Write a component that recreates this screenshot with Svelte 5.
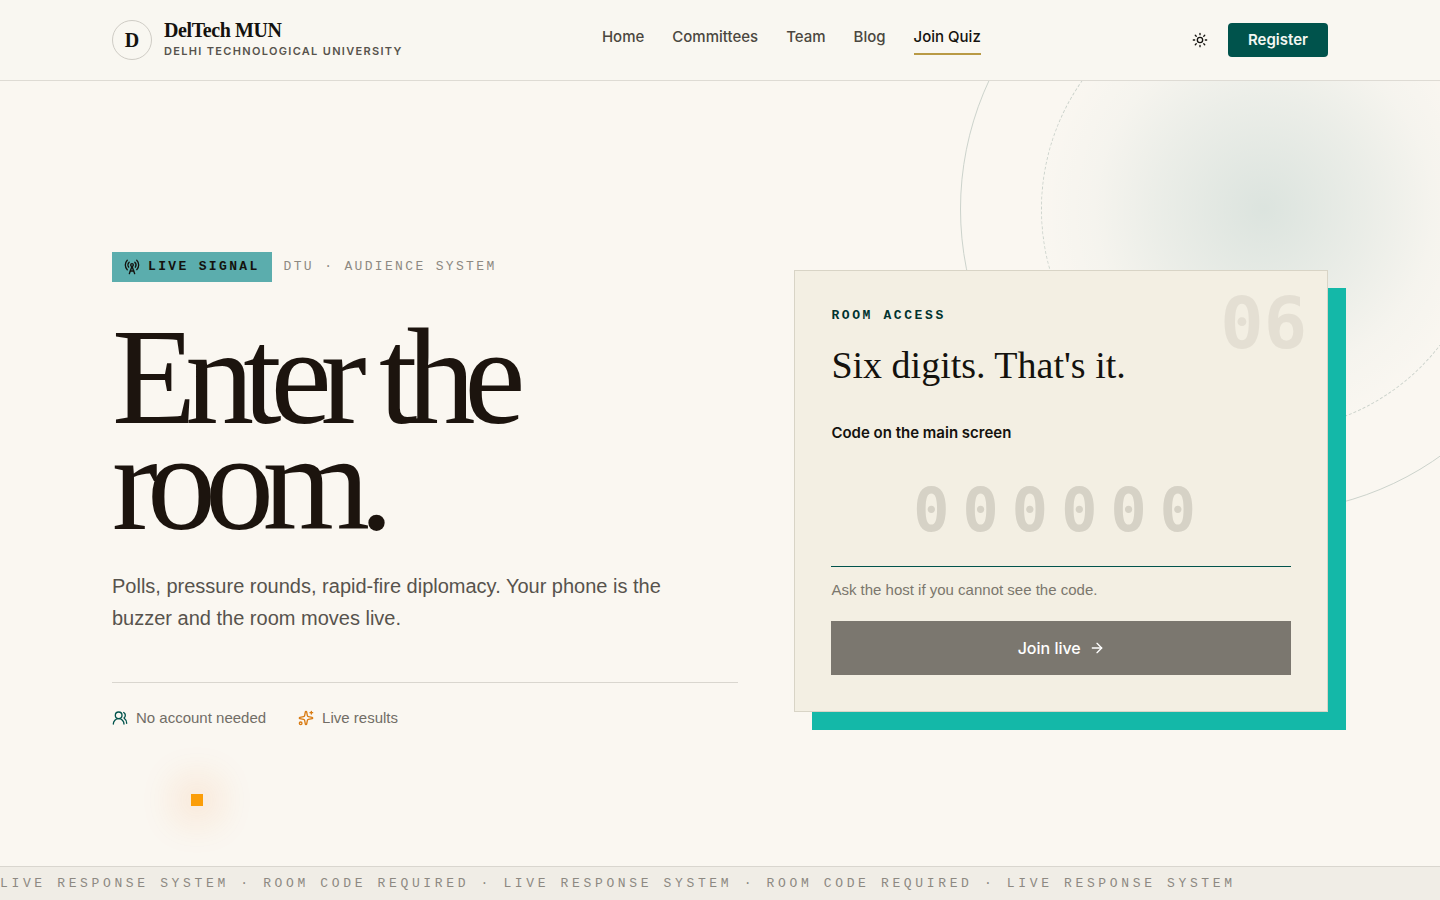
<script lang="ts">
  interface NavLink {
    label: string;
    href: string;
    current?: boolean;
  }

  const links: NavLink[] = [
    { label: "Home", href: "#home" },
    { label: "Committees", href: "#committees" },
    { label: "Team", href: "#team" },
    { label: "Blog", href: "#blog" },
    { label: "Join Quiz", href: "#quiz", current: true },
  ];

  const ticker = [
    "LIVE RESPONSE SYSTEM",
    "ROOM CODE REQUIRED",
    "LIVE RESPONSE SYSTEM",
    "ROOM CODE REQUIRED",
    "LIVE RESPONSE SYSTEM",
  ].join(" · ");

  let code = $state("");
  const ready = $derived(/^\d{6}$/.test(code));

  function join(event: SubmitEvent) {
    event.preventDefault();
    if (!ready) return;
    window.location.hash = `room-${code}`;
  }
</script>

<div class="page">
  <header>
    <div class="bar">
      <a class="brand" href="#home">
        <span class="crest">D</span>
        <span class="brand-text">
          <span class="brand-name">DelTech MUN</span>
          <span class="brand-sub">Delhi Technological University</span>
        </span>
      </a>

      <nav aria-label="Main">
        {#each links as link}
          <a href={link.href} class:current={link.current} aria-current={link.current ? "page" : undefined}>
            {link.label}
          </a>
        {/each}
      </nav>

      <div class="actions">
        <button type="button" class="theme" aria-label="Toggle theme">
          <svg class="icon" viewBox="0 0 24 24" aria-hidden="true">
            <circle cx="12" cy="12" r="4" />
            <path d="M12 2v2M12 20v2M4.93 4.93l1.41 1.41M17.66 17.66l1.41 1.41M2 12h2M20 12h2M6.34 17.66l-1.41 1.41M19.07 4.93l-1.41 1.41" />
          </svg>
        </button>
        <a class="register" href="#register">Register</a>
      </div>
    </div>
  </header>

  <main>
    <div class="rings" aria-hidden="true"></div>
    <div class="spark" aria-hidden="true"></div>

    <div class="hero">
      <section class="intro">
        <div class="eyebrow">
          <span class="signal">
            <svg class="icon" viewBox="0 0 24 24" aria-hidden="true">
              <path d="M4.9 16.1C1 12.2 1 5.8 4.9 1.9" />
              <path d="M7.8 4.7a6.14 6.14 0 0 0-.8 7.5" />
              <circle cx="12" cy="9" r="2" />
              <path d="M16.2 4.8c2 2 2.26 5.11.8 7.47" />
              <path d="M19.1 1.9a9.96 9.96 0 0 1 0 14.1" />
              <path d="M9.5 18h5" />
              <path d="m8 22 4-11 4 11" />
            </svg>
            LIVE SIGNAL
          </span>
          <span class="system">DTU · AUDIENCE SYSTEM</span>
        </div>

        <h1>Enter the<br />room.</h1>

        <p class="lead">
          Polls, pressure rounds, rapid-fire diplomacy. Your phone is the buzzer and the room
          moves live.
        </p>

        <ul class="perks">
          <li>
            <svg class="icon teal" viewBox="0 0 24 24" aria-hidden="true">
              <path d="M18 21a8 8 0 0 0-16 0" />
              <circle cx="10" cy="8" r="5" />
              <path d="M22 20c0-3.37-2-6.5-4-8a5 5 0 0 0-.45-8.3" />
            </svg>
            No account needed
          </li>
          <li>
            <svg class="icon orange" viewBox="0 0 24 24" aria-hidden="true">
              <path d="M11.017 2.814a1 1 0 0 1 1.966 0l1.051 5.558a2 2 0 0 0 1.594 1.594l5.558 1.051a1 1 0 0 1 0 1.966l-5.558 1.051a2 2 0 0 0-1.594 1.594l-1.051 5.558a1 1 0 0 1-1.966 0l-1.051-5.558a2 2 0 0 0-1.594-1.594l-5.558-1.051a1 1 0 0 1 0-1.966l5.558-1.051a2 2 0 0 0 1.594-1.594z" />
              <path d="M20 2v4M22 4h-4" />
              <circle cx="4" cy="20" r="2" />
            </svg>
            Live results
          </li>
        </ul>
      </section>

      <form class="card" onsubmit={join}>
        <span class="count" aria-hidden="true">06</span>
        <p class="kicker">ROOM ACCESS</p>
        <h2>Six digits. That's it.</h2>
        <label for="room-code">Code on the main screen</label>
        <input
          id="room-code"
          type="text"
          inputmode="numeric"
          autocomplete="off"
          maxlength="6"
          placeholder="000000"
          aria-describedby="room-hint"
          bind:value={code}
        />
        <p class="hint" id="room-hint">Ask the host if you cannot see the code.</p>
        <button type="submit" class="join" disabled={!ready}>
          Join live
          <svg class="icon" viewBox="0 0 24 24" aria-hidden="true">
            <path d="M5 12h14" />
            <path d="m12 5 7 7-7 7" />
          </svg>
        </button>
      </form>
    </div>
  </main>

  <footer>{ticker}</footer>
</div>

<style>
  :global(body) {
    margin: 0;
    background: #faf7f1;
  }

  .page {
    --ink: #14120e;
    --teal: #00534c;
    --serif: "Liberation Serif", "Times New Roman", serif;
    --sans: Inter, "Liberation Sans", sans-serif;
    --copy: "Liberation Sans", Arial, sans-serif;
    --mono: "Liberation Mono", "Courier New", monospace;
    --digits: "DejaVu Sans Mono", monospace;

    display: flex;
    flex-direction: column;
    min-height: 100vh;
    color: var(--ink);
    font-family: var(--sans);
    font-size: 15px;
    line-height: 24px;
  }

  .page * {
    box-sizing: border-box;
  }

  a {
    color: inherit;
    text-decoration: none;
  }

  h1,
  h2,
  p {
    margin: 0;
  }

  .icon {
    width: 16px;
    height: 16px;
    flex: none;
    fill: none;
    stroke: currentColor;
    stroke-width: 2;
    stroke-linecap: round;
    stroke-linejoin: round;
  }

  header {
    background: #f9f7f1;
    border-bottom: 1px solid #dedbd4;
  }

  .bar,
  .hero {
    width: 100%;
    max-width: 1280px;
    margin: 0 auto;
    padding: 0 32px;
  }

  .bar {
    display: flex;
    align-items: center;
    justify-content: space-between;
    min-height: 80px;
  }

  .brand {
    display: flex;
    align-items: center;
    gap: 12px;
  }

  .crest {
    display: grid;
    place-items: center;
    width: 40px;
    height: 40px;
    border: 1px solid #cfccc5;
    border-radius: 50%;
    font-family: var(--serif);
    font-size: 20px;
    font-weight: 700;
  }

  .brand-text {
    display: flex;
    flex-direction: column;
    gap: 4px;
  }

  .brand-name {
    font-family: var(--serif);
    font-size: 20px;
    font-weight: 700;
    line-height: 18px;
    letter-spacing: -0.02em;
  }

  .brand-sub {
    color: #57534c;
    font-size: 11px;
    font-weight: 600;
    line-height: 16px;
    letter-spacing: 0.12em;
    text-transform: uppercase;
  }

  nav {
    display: flex;
    gap: 28px;
    color: #4b4740;
    font-weight: 500;
  }

  nav a {
    padding-bottom: 4px;
    border-bottom: 2px solid transparent;
  }

  nav .current {
    color: var(--ink);
    border-color: #b99a45;
  }

  .actions {
    display: flex;
    align-items: center;
    gap: 8px;
  }

  .theme {
    display: grid;
    place-items: center;
    width: 40px;
    height: 40px;
    padding: 0;
    border: 0;
    background: none;
    color: var(--ink);
    cursor: pointer;
  }

  .register {
    padding: 5px 20px;
    border-radius: 4px;
    background: var(--teal);
    color: #f4f7f2;
    font-weight: 600;
  }

  main {
    position: relative;
    display: flex;
    flex: 1;
    align-items: center;
    overflow: hidden;
  }

  .rings {
    position: absolute;
    top: -176px;
    right: -128px;
    width: 608px;
    height: 608px;
    border: 1px solid #ccd3cc;
    border-radius: 50%;
    background: radial-gradient(closest-side, rgba(0, 88, 88, 0.12), rgba(0, 88, 88, 0.06) 36%, rgba(0, 88, 88, 0.02) 56%, rgba(0, 88, 88, 0) 76%);
  }

  .rings::after {
    content: "";
    position: absolute;
    inset: 80px;
    border: 1px dashed #ccd3cc;
    border-radius: 50%;
  }

  .spark {
    position: absolute;
    left: 191px;
    bottom: 60px;
    width: 12px;
    height: 12px;
    background: #fb9e09;
    box-shadow: 0 0 36px 16px rgba(249, 115, 22, 0.12);
  }

  .hero {
    position: relative;
    display: grid;
    grid-template-columns: 1.08fr 0.92fr;
    align-items: center;
    gap: 56px;
    padding-top: 34px;
  }

  .eyebrow {
    display: flex;
    align-items: center;
    gap: 12px;
    margin-bottom: 42px;
    font-family: var(--mono);
    font-size: 13px;
    line-height: 18px;
    letter-spacing: 0.18em;
  }

  .signal {
    display: flex;
    align-items: center;
    gap: 8px;
    padding: 6px 12px;
    background: #5badad;
    font-weight: 700;
  }

  .system {
    color: #8d8982;
  }

  h1 {
    color: #1c140e;
    font-family: var(--serif);
    font-size: 138px;
    font-weight: 400;
    line-height: 106px;
    letter-spacing: -0.08em;
  }

  .lead {
    max-width: 576px;
    margin-top: 34px;
    color: #57534d;
    font-family: var(--copy);
    font-size: 20px;
    line-height: 32px;
  }

  .perks {
    display: flex;
    gap: 32px;
    margin: 48px 0 0;
    padding: 24px 0 0;
    border-top: 1px solid #d9d6cf;
    color: #716d66;
    font-family: var(--copy);
    line-height: 22px;
    list-style: none;
  }

  .perks li {
    display: flex;
    align-items: center;
    gap: 8px;
  }

  .teal {
    color: var(--teal);
  }

  .orange {
    color: #d97b12;
  }

  .card {
    position: relative;
    display: flex;
    flex-direction: column;
    padding: 36px;
    border: 1px solid #d8d4c6;
    background: #f3efe3;
    box-shadow: 18px 18px 0 #14b8a8;
  }

  .count {
    position: absolute;
    top: 16px;
    right: 20px;
    color: #e4dfd3;
    font-family: var(--digits);
    font-size: 72px;
    font-weight: 700;
    line-height: 72px;
  }

  .kicker {
    color: #00332f;
    font-family: var(--mono);
    font-size: 13px;
    font-weight: 700;
    line-height: 18px;
    letter-spacing: 0.2em;
  }

  h2 {
    margin-top: 18px;
    font-family: var(--serif);
    font-size: 38px;
    font-weight: 400;
    line-height: 44px;
  }

  label {
    margin-top: 34px;
    font-weight: 600;
  }

  input {
    width: 100%;
    height: 112px;
    margin-top: 10px;
    padding: 0;
    border: 0;
    border-bottom: 1px solid var(--teal);
    border-radius: 0;
    outline: none;
    background: transparent;
    color: var(--ink);
    font-family: var(--digits);
    font-size: 60px;
    font-weight: 700;
    letter-spacing: 0.22em;
    text-align: center;
  }

  input::placeholder {
    color: #d6d2c6;
    opacity: 1;
  }

  .hint {
    margin-top: 12px;
    color: #7b776d;
    font-family: var(--copy);
    line-height: 22px;
  }

  .join {
    display: flex;
    align-items: center;
    justify-content: center;
    gap: 8px;
    width: 100%;
    height: 54px;
    margin-top: 20px;
    border: 0;
    background: var(--ink);
    color: #fff;
    font-family: inherit;
    font-size: 16px;
    font-weight: 500;
    cursor: pointer;
  }

  .join:disabled {
    background: #7b776f;
    cursor: default;
  }

  footer {
    overflow: hidden;
    border-top: 1px solid #d9d6cf;
    background: #f0ede6;
    color: #8d8982;
    font-family: var(--mono);
    font-size: 13px;
    line-height: 33px;
    letter-spacing: 0.28em;
    white-space: nowrap;
  }

  @media (max-width: 960px) {
    .bar {
      flex-wrap: wrap;
      gap: 16px;
      padding: 16px 32px;
    }

    .hero {
      grid-template-columns: 1fr;
      padding: 64px 32px;
    }

    h1 {
      font-size: 96px;
      line-height: 80px;
    }
  }
</style>
